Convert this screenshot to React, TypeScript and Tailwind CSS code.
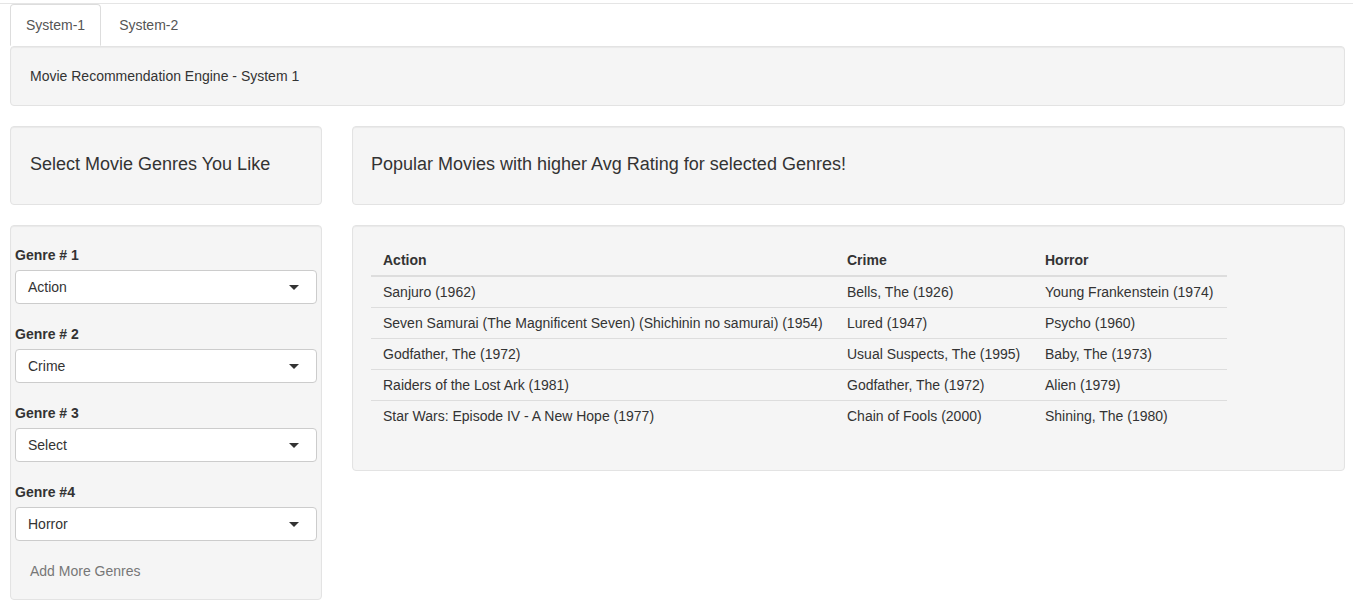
import React from "react";

const wellCls =
  "bg-[#f5f5f5] border border-[#e3e3e3] rounded-[4px] shadow-[inset_0_1px_1px_rgba(0,0,0,0.05)]";

function Caret() {
  return (
    <svg width="10" height="5" viewBox="0 0 10 5" className="block">
      <path d="M0 0 L10 0 L5 5 Z" fill="#333" />
    </svg>
  );
}

function GenreSelect({ label, value }: { label: string; value: string }) {
  return (
    <div className="mb-[20px]">
      <div className="font-bold leading-[20px] mb-[5px]">{label}</div>
      <div className="h-[34px] bg-white border border-[#ccc] rounded-[4px] flex items-center justify-between pl-[12px] pr-[17px]">
        <span className="leading-[20px]">{value}</span>
        <Caret />
      </div>
    </div>
  );
}

const rows: [string, string, string][] = [
  ["Sanjuro (1962)", "Bells, The (1926)", "Young Frankenstein (1974)"],
  [
    "Seven Samurai (The Magnificent Seven) (Shichinin no samurai) (1954)",
    "Lured (1947)",
    "Psycho (1960)",
  ],
  ["Godfather, The (1972)", "Usual Suspects, The (1995)", "Baby, The (1973)"],
  ["Raiders of the Lost Ark (1981)", "Godfather, The (1972)", "Alien (1979)"],
  [
    "Star Wars: Episode IV - A New Hope (1977)",
    "Chain of Fools (2000)",
    "Shining, The (1980)",
  ],
];

export default function App() {
  return (
    <div className="font-['Liberation_Sans',Arial,sans-serif] text-[14px] text-[#333] bg-white min-h-[609px] pt-[3px]">
      <div className="border-t border-[#e5e5e5]" />
      {/* tabs */}
      <div className="flex pl-[10px]">
        <div className="px-[15px] py-[10px] leading-[20px] border border-[#ddd] border-b-transparent rounded-t-[4px] bg-white text-[#555] mr-[2px]">
          System-1
        </div>
        <div className="px-[15px] py-[10px] leading-[20px] border border-transparent text-[#555]">
          System-2
        </div>
      </div>
      <div className="pl-[10px] pr-[8px]">
        <div className={`${wellCls} px-[19px] py-[19px] leading-[20px]`}>
          Movie Recommendation Engine - System 1
        </div>
        <div className="flex gap-[30px] mt-[20px]">
          {/* left column */}
          <div className="w-[312px] shrink-0">
            <div className={`${wellCls} h-[79px] flex items-center px-[19px] pb-[2px]`}>
              <span className="text-[18px]">Select Movie Genres You Like</span>
            </div>
            <div className={`${wellCls} mt-[20px] px-[4px] pt-[19px] pb-[18px]`}>
              <GenreSelect label="Genre # 1" value="Action" />
              <GenreSelect label="Genre # 2" value="Crime" />
              <GenreSelect label="Genre # 3" value="Select" />
              <GenreSelect label="Genre #4" value="Horror" />
              <div className="ml-[15px] leading-[20px] text-[#777]">Add More Genres</div>
            </div>
          </div>
          {/* right column */}
          <div className="flex-1">
            <div className={`${wellCls} h-[79px] flex items-center px-[18px] pb-[2px]`}>
              <span className="text-[18px]">
                Popular Movies with higher Avg Rating for selected Genres!
              </span>
            </div>
            <div className={`${wellCls} mt-[20px] pt-[19px] pb-[19px] px-[18px]`}>
              <table className="border-collapse mb-[20px] leading-[20px]">
                <thead>
                  <tr>
                    <th className="text-left font-bold w-[464px] pl-[12px] py-[5px] border-b-2 border-[#ddd]">
                      Action
                    </th>
                    <th className="text-left font-bold w-[198px] pl-[12px] py-[5px] border-b-2 border-[#ddd]">
                      Crime
                    </th>
                    <th className="text-left font-bold w-[194px] pl-[12px] py-[5px] border-b-2 border-[#ddd]">
                      Horror
                    </th>
                  </tr>
                </thead>
                <tbody>
                  {rows.map((r, i) => (
                    <tr key={i} className={i === 0 ? "" : "border-t border-[#ddd]"}>
                      {r.map((c, j) => (
                        <td key={j} className="pl-[12px] py-[5px] whitespace-nowrap">
                          {c}
                        </td>
                      ))}
                    </tr>
                  ))}
                </tbody>
              </table>
            </div>
          </div>
        </div>
      </div>
    </div>
  );
}
